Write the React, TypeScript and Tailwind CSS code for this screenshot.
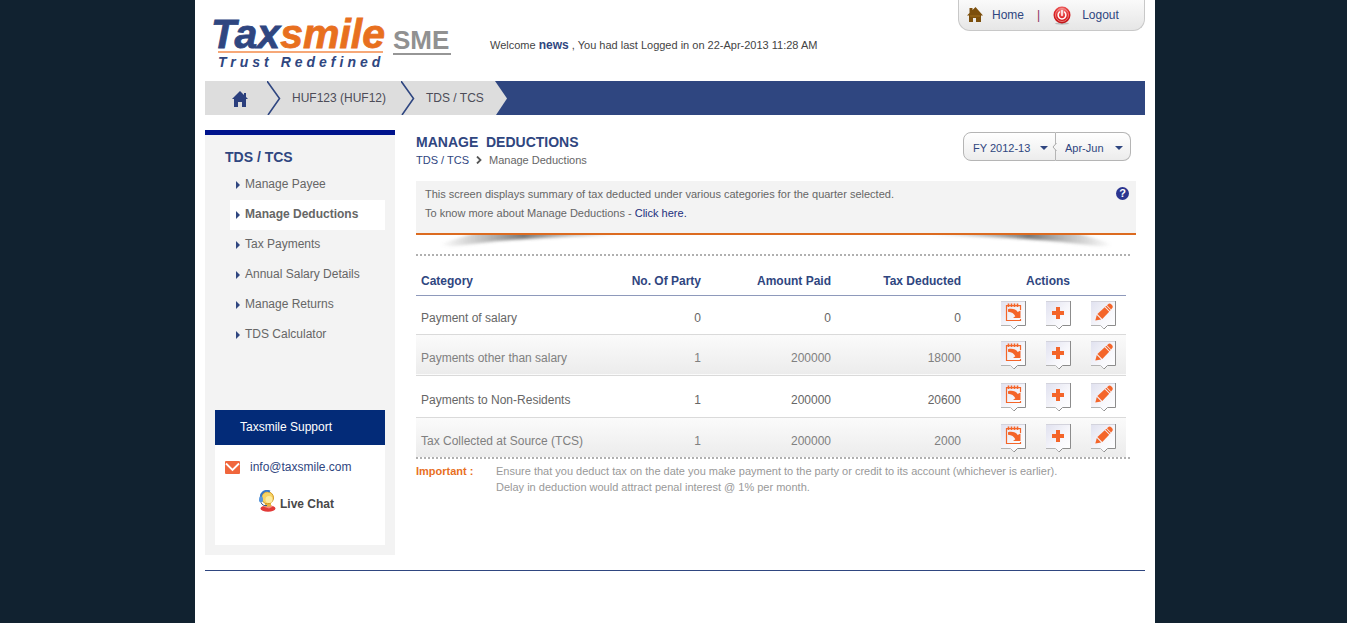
import { ReactNode } from "react";

function Logo() {
  return (
    <a href="#" aria-label="Taxsmile SME" className="block shrink-0">
      <svg width="244" height="56" viewBox="0 0 244 56" overflow="visible" fontFamily="Liberation Sans, Arial, sans-serif">
        <text x="4" y="32" fontSize="41" fontWeight="bold" fontStyle="italic" fill="#2f4680" stroke="#2f4680" strokeWidth="0.8">
          Tax<tspan fill="#e8701f" stroke="#e8701f">smile</tspan>
        </text>
        <rect x="11" y="35" width="165" height="2" fill="#f6a878" />
        <text x="11" y="51" fontSize="14" fontWeight="bold" fontStyle="italic" fill="#2f4680" className="tracking-[4px]">
          Trust Redefined
        </text>
        <text x="186" y="33" fontSize="26" fontWeight="bold" fill="#919191">
          SME
        </text>
        <rect x="186" y="37" width="58" height="2" fill="#969696" />
      </svg>
    </a>
  );
}

function HouseIcon() {
  return (
    <svg width="16" height="16" viewBox="0 0 16 16" fill="#2b3f7d">
      <path d="M8 0 0 8h2v8h4v-5h4v5h4V8h2l-2-2V2h-2v2z" />
    </svg>
  );
}

function Chevron() {
  return (
    <svg width="14" height="34" viewBox="0 0 14 34" fill="none" stroke="#2f4680" strokeWidth="1.6">
      <path d="M0 0 12.5 17.500 1 34" />
    </svg>
  );
}

function TopHouse() {
  return (
    <svg width="16" height="16" viewBox="0 0 16 16">
      <path d="M8.500 0 5.500 3V1H2.500v5L0 8.500h2V15h4v-4h3v4h5V8.500h2z" fill="#7c4f0c" />
      <path d="M3 8h10v2H3z" fill="#8d5e14" />
    </svg>
  );
}

function PowerIcon() {
  return (
    <svg width="18" height="19" viewBox="0 0 18 19">
      <defs>
        <radialGradient id="power" cx=".5" cy=".25" r=".8">
          <stop offset="0" stopColor="#f48a88" />
          <stop offset=".5" stopColor="#e0282a" />
          <stop offset="1" stopColor="#b80c10" />
        </radialGradient>
      </defs>
      <ellipse cx="9" cy="17.500" rx="7" ry="1.200" fill="#bbb" />
      <circle cx="9" cy="9" r="8.500" fill="url(#power)" />
      <circle cx="9" cy="9" r="6.500" fill="none" stroke="#f6a3a0" strokeWidth=".7" />
      <path d="M6.500 6a3.900 3.900 0 1 0 5 0M9 4.500v5" fill="none" stroke="#fff" strokeWidth="1.500" strokeLinecap="round" />
    </svg>
  );
}

function Tile({ label, children }: { label: string; children: ReactNode }) {
  return (
    <button type="button" aria-label={label} className="block h-7 w-[25px]">
      <svg width="25" height="28" viewBox="0 0 25 28">
        <defs>
          <linearGradient id="tile" x1="0" y1="0" x2="1" y2="1">
            <stop offset="0" stopColor="#e0e1ef" />
            <stop offset=".6" stopColor="#f8f8fc" />
            <stop offset="1" stopColor="#fff" />
          </linearGradient>
        </defs>
        <path d="M0 0h24.500v24.500H16L12.500 28 9 24.500H0z" fill="url(#tile)" />
        <path d="M0 .5h24" stroke="#d3d3dc" />
        <path d="M24.500 0v24.500H16.500L13 28" fill="none" stroke="#8c8c8c" />
        <path d="M0 24.500h9.500l3.500 3.500" fill="none" stroke="#b4b4b4" />
        {children}
      </svg>
    </button>
  );
}

function NoteGlyph() {
  return (
    <>
      <path d="M19.500 9V4.500h-14v15h14v-1.500" fill="none" stroke="#f4652a" strokeWidth="1.200" />
      <path d="M5 4h15v1.200H5z" fill="#f4652a" />
      <path d="M7.500 2.500v3.500M10.500 2.500v3.500M13.500 2.500v3.500M16.500 2.500v3.500" stroke="#f4652a" strokeWidth="1.600" />
      <path d="M7 8.200c4-1 8 0 9.700 2.800l2.800-1.500v7.500h-7.500l2.300-1.700c-1.300-2.800-3.500-4.300-7.300-4.600z" fill="#f4652a" />
    </>
  );
}

function PlusGlyph() {
  return <path d="M10 6h4v4h4v4h-4v4h-4v-4H6v-4h4z" fill="#f4652a" />;
}

function PencilGlyph() {
  return (
    <g fill="#f4652a">
      <path d="m16 4.200 1.700-1.400q1.300-.7 2.500.4l1 1q1 1.300.3 2.500l-1.400 1.700z" />
      <path d="m14.300 5.600 1.100-.9 4.300 4.300-1 1.100z" />
      <path d="M13.700 6.200 6.400 13.100l4.900 4.900 6.900-7.300z" />
      <path d="m5.800 14-1.500 5.500 5.900-1.100z" />
    </g>
  );
}

function HeadsetIcon() {
  return (
    <svg width="18" height="22" viewBox="0 0 18 22">
      <ellipse cx="10" cy="18.500" rx="7.500" ry="3.200" fill="#e23a38" />
      <path d="M5 16.500c2-2.500 7-2.500 10 0l-4 2z" fill="#f48a80" />
      <path d="M7 13h6v3.500H7z" fill="#e9b43e" />
      <circle cx="9.500" cy="7.800" r="6" fill="#f8d465" stroke="#cf961e" />
      <circle cx="11" cy="9.500" r="3.500" fill="#fceba0" />
      <path d="M3.500 10C1 3 7-.5 12 1.500" fill="none" stroke="#3878c8" strokeWidth="2" />
      <rect x="1" y="6.500" width="4" height="6" rx="2" fill="#5a98dc" />
      <path d="M3 12.500c1 2.500 3 3.500 6 3" fill="none" stroke="#3a5788" />
    </svg>
  );
}

function PanelShadow({ className }: { className?: string }) {
  return (
    <svg width="190" height="14" viewBox="0 0 190 14" className={className}>
      <defs>
        <linearGradient id="panelShade">
          <stop offset="0" stopColor="#777" stopOpacity="0" />
          <stop offset=".15" stopColor="#777" stopOpacity=".3" />
          <stop offset=".45" stopColor="#555" stopOpacity=".8" />
          <stop offset="1" stopColor="#888" stopOpacity="0" />
        </linearGradient>
        <filter id="panelSoft" x="-10%" y="-50%" width="120%" height="220%">
          <feGaussianBlur stdDeviation="1.6" />
        </filter>
      </defs>
      <path d="M4 9 45-4H188V0Q80 3 45 8T4 10z" fill="url(#panelShade)" filter="url(#panelSoft)" />
    </svg>
  );
}

const menu = ["Manage Payee", "Manage Deductions", "Tax Payments", "Annual Salary Details", "Manage Returns", "TDS Calculator"];

const rows = [
  { name: "Payment of salary", party: "0", paid: "0", tax: "0", style: "h-[39px] text-[#666]" },
  { name: "Payments other than salary", party: "1", paid: "200000", tax: "18000", style: "h-[41px] bg-linear-to-b from-[#fbfbfb] to-[#ececec] text-[#808080]" },
  { name: "Payments to Non-Residents", party: "1", paid: "200000", tax: "20600", style: "h-[42px] text-[#666]" },
  { name: "Tax Collected at Source (TCS)", party: "1", paid: "200000", tax: "2000", style: "h-[40px] bg-linear-to-b from-[#fbfbfb] to-[#ececec] text-[#808080]" },
];

function DottedRule() {
  return <div className="mr-[5px] h-0.5 bg-[repeating-linear-gradient(90deg,#b0b0b0_0_2px,transparent_2px_4px)]" />;
}

function Picker({ label, value, className }: { label: string; value: string; className: string }) {
  return (
    <div className="relative">
      <select
        aria-label={label}
        defaultValue={value}
        className={`h-[29px] appearance-none border-[#b5b5b5] bg-linear-to-b from-white to-[#ececec] pt-[3px] pl-[9px] text-[11px] text-[#2f4680] ${className}`}
      >
        <option>{value}</option>
      </select>
      <svg width="8" height="4" viewBox="0 0 8 4" className="pointer-events-none absolute top-[14px] right-2" fill="#2f4680">
        <path d="M0 0h8L4 4z" />
      </svg>
    </div>
  );
}

export default function App() {
  return (
    <div className="min-h-screen bg-[#112230] pl-[3px] font-['Liberation_Sans',Arial,sans-serif] text-xs text-[#666]">
      <div className="mx-auto min-h-screen max-w-[960px] bg-white px-2.5">
        <header className="flex h-[81px] items-start">
          <div className="pt-4 pl-[2px]">
            <Logo />
          </div>
          <p className="pt-[37px] pl-[39px] text-[11px] leading-4 text-[#444]">
            Welcome <b className="text-xs text-[#2f4680]">news</b> , You had last Logged in on 22-Apr-2013 11:28 AM
          </p>
          <nav className="ml-auto flex h-[31px] w-[187px] items-center rounded-b-xl border border-t-0 border-[#c8c8c8] bg-linear-to-b from-[#fafafa] to-[#e6e6e6] pl-2 text-[#2f4680]">
            <a href="#" className="flex items-center gap-[9px]">
              <TopHouse />
              Home
            </a>
            <span className="pl-[13px] text-[#8a3060]">|</span>
            <a href="#" className="flex items-center gap-[11px] pl-[13px]">
              <PowerIcon />
              Logout
            </a>
          </nav>
        </header>

        <nav aria-label="Breadcrumb" className="flex h-[34px] items-center bg-[#2f4680] leading-[34px] text-[#4c4c58]">
          <a href="#" aria-label="Home" className="flex h-full w-[62px] items-center bg-[#ddd] pt-0.5 pl-[27px]">
            <HouseIcon />
          </a>
          <a href="#" className="flex h-full items-center bg-[#ddd] pr-[15px]">
            <Chevron />
            <span className="pl-[11px]">HUF123 (HUF12)</span>
          </a>
          <a href="#" className="flex h-full items-center bg-[#ddd] pr-[11px]">
            <Chevron />
            <span className="pl-[11px]">TDS / TCS</span>
          </a>
          <svg width="12" height="34" viewBox="0 0 12 34" fill="#ddd">
            <path d="M0 0 12 17.500 1 34H0z" />
          </svg>
        </nav>

        <div className="flex items-start gap-[21px] pt-[15px]">
          <aside className="w-[190px] shrink-0 border-t-[5px] border-[#00138c] bg-[#f3f3f3] px-2.5 pb-2.5">
            <h2 className="pt-2.5 pb-px pl-2.5 text-sm leading-6 font-bold text-[#2f4680]">TDS / TCS</h2>
            <ul className="h-60 pl-[15px]">
              {menu.map((item) => (
                <li key={item}>
                  <a
                    href="#"
                    className={`flex h-[30px] items-center gap-[5px] pl-1.5 ${item === "Manage Deductions" ? "bg-white font-bold" : ""}`}
                  >
                    <svg width="4" height="8" viewBox="0 0 4 8" fill="#2f4680">
                      <path d="M0 0 4 4 0 8z" />
                    </svg>
                    <span className="pb-0.5">{item}</span>
                  </a>
                </li>
              ))}
            </ul>
            <section className="bg-white pb-[33px]">
              <h3 className="bg-[#032b78] pl-[25px] leading-[35px] text-white">Taxsmile Support</h3>
              <a href="#" className="flex items-center gap-2.5 pt-[13px] pl-2.5 leading-[18px] text-[#2f4680]">
                <svg width="15" height="13" viewBox="0 0 15 13">
                  <rect width="15" height="13" rx="1" fill="#f0663c" />
                  <path d="M1 2.500 7.500 9 14 2.500" fill="none" stroke="#fff" strokeWidth="1.800" />
                </svg>
                info@taxsmile.com
              </a>
              <a href="#" className="flex items-center justify-center gap-1 pt-[14px] pr-2 font-bold text-[#484848]">
                <HeadsetIcon />
                <span className="pt-1.5">Live Chat</span>
              </a>
            </section>
          </aside>

          <main className="min-w-0 flex-1 pr-[9px]">
            <div className="flex h-[51px] items-start justify-between pt-[2px]">
              <div>
                <h1 className="text-sm leading-5 font-bold text-[#2f4680]">MANAGE&nbsp; DEDUCTIONS</h1>
                <p className="flex items-center gap-[7px] text-[11px] leading-4">
                  <a href="#" className="text-[#2f4680]">TDS / TCS</a>
                  <svg width="6" height="8" viewBox="0 0 6 8" fill="none" stroke="#555" strokeWidth="1.800">
                    <path d="m1 .5 3.500 3.500L1 7.500" />
                  </svg>
                  Manage Deductions
                </p>
              </div>
              <div className="relative mr-[5px] flex">
                <Picker label="Financial year" value="FY 2012-13" className="w-[93px] rounded-l-lg border" />
                <Picker label="Quarter" value="Apr-Jun" className="w-[75px] rounded-r-lg border border-l-0" />
                <svg width="5" height="8" viewBox="0 0 5 8" className="absolute top-[11px] left-[89px]" fill="#f5f5f5" stroke="#aaa">
                  <path d="M4.500 0 1 4l3.500 4" />
                </svg>
              </div>
            </div>

            <section className="flex h-[54px] items-start justify-between border-b-2 border-[#dc6b20] bg-[#f3f3f3] pt-1 pr-[7px] pl-[9px] text-[11px] leading-[19px]">
              <div>
                <p>This screen displays summary of tax deducted under various categories for the quarter selected.</p>
                <p>
                  To know more about Manage Deductions - <a href="#" className="text-[#1c2f7c]">Click here.</a>
                </p>
              </div>
              <button
                type="button"
                aria-label="Help"
                className="mt-0.5 size-[13px] rounded-full bg-[#2b3590] text-[11px] leading-[13px] font-bold text-white"
              >
                ?
              </button>
            </section>
            <div className="flex h-[19px] justify-between px-5">
              <PanelShadow />
              <PanelShadow className="-scale-x-100" />
            </div>
            <DottedRule />

            <div className="pr-2.5">
              <table className="w-full table-fixed border-collapse">
                <thead>
                  <tr className="h-[39px] border-b border-[#8e99bb] text-[#2f4680]">
                    <th className="pt-3 pl-[5px] text-left">Category</th>
                    <th className="w-[110px] pt-3 text-right">No. Of Party</th>
                    <th className="w-[130px] pt-3 text-right">Amount Paid</th>
                    <th className="w-[130px] pt-3 text-right">Tax Deducted</th>
                    <th className="w-[165px] pt-3 pl-[65px] text-left">Actions</th>
                  </tr>
                </thead>
                <tbody>
                  {rows.map((row) => (
                    <tr key={row.name} className={`border-b border-[#dadada] last:border-b-0 ${row.style}`}>
                      <td className="pt-[7px] pl-[5px]">{row.name}</td>
                      <td className="pt-[7px] text-right">{row.party}</td>
                      <td className="pt-[7px] text-right">{row.paid}</td>
                      <td className="pt-[7px] text-right">{row.tax}</td>
                      <td className="pt-px pl-10">
                        <div className="flex gap-5">
                          <Tile label="View"><NoteGlyph /></Tile>
                          <Tile label="Add"><PlusGlyph /></Tile>
                          <Tile label="Edit"><PencilGlyph /></Tile>
                        </div>
                      </td>
                    </tr>
                  ))}
                </tbody>
              </table>
            </div>
            <DottedRule />

            <div className="flex pt-1 text-[11px] leading-4 text-[#999]">
              <b className="w-20 shrink-0 text-[#e8701f]">Important :</b>
              <p>
                Ensure that you deduct tax on the date you make payment to the party or credit to its account (whichever is earlier).
                <br />
                Delay in deduction would attract penal interest @ 1% per month.
              </p>
            </div>
          </main>
        </div>

        <footer className="mt-[15px] border-t border-[#2f4680]" />
      </div>
    </div>
  );
}
